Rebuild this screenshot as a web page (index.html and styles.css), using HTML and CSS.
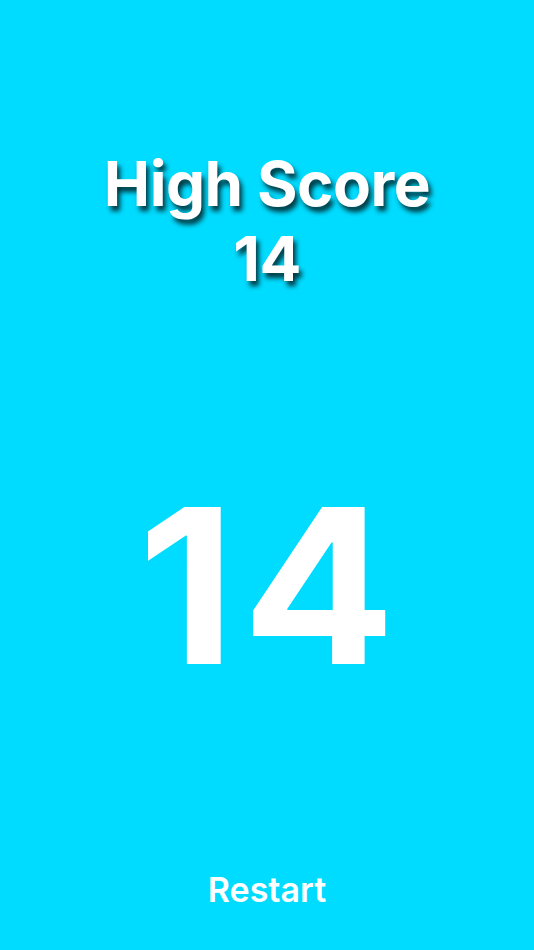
FILE: index.html
```html
<!DOCTYPE html>
<html lang="en">
<head>
    <meta charset="UTF-8">
    <meta name="viewport" content="width=device-width, initial-scale=1.0">
    <title>Game Over</title>
    <link rel="stylesheet" href="styles.css">
</head>
<body>
    <div class="screen">
        <div class="high-score">
            <div class="high-score-label">High Score</div>
            <div class="high-score-value">14</div>
        </div>

        <div class="score">14</div>

        <button class="restart-button">Restart</button>
    </div>
</body>
</html>
```

FILE: styles.css
```css
body {
    margin: 0;
    font-family: Inter, "Noto Sans", sans-serif;
    background-color: #00dcff;
}

.screen {
    height: 100vh;
    display: flex;
    flex-direction: column;
    align-items: center;
    box-sizing: border-box;
    padding: 146px 0 40px;
}

.high-score {
    text-align: center;
    color: #ffffff;
    font-weight: 700;
    font-size: 62px;
    line-height: 75px;
    letter-spacing: -0.5px;
    text-shadow: 3px 5px 5px rgba(0, 0, 0, 0.75);
}

.score {
    flex: 1;
    display: flex;
    align-items: center;
    padding-top: 4px;
    color: #ffffff;
    font-size: 216px;
    font-weight: 650;
    letter-spacing: 6px;
    text-indent: 6px;
    transform: scaleX(1.05);
}

.restart-button {
    background: none;
    border: none;
    padding: 0;
    color: #ffffff;
    font-family: inherit;
    font-size: 34px;
    font-weight: 600;
    line-height: 40px;
    cursor: pointer;
}
```
